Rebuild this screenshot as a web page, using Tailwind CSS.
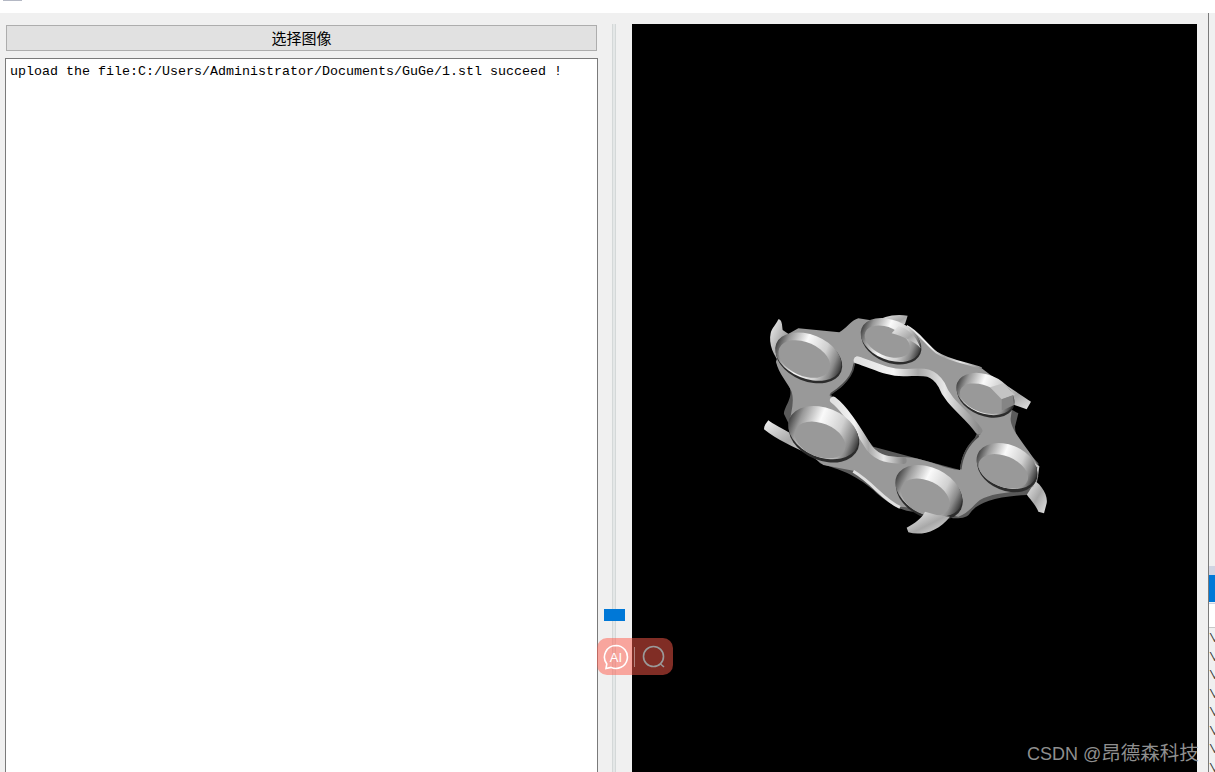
<!DOCTYPE html>
<html lang="en">
<head>
<meta charset="UTF-8">
<title>STL Viewer</title>
<script src="https://cdn.jsdelivr.net/npm/@tailwindcss/browser@4"></script>
</head>
<body class="bg-white overflow-hidden">
<div class="relative w-[1215px] h-[772px] overflow-hidden flex flex-col bg-[#f0f0f0]">
  <!-- top strip of the window behind -->
  <div class="h-[13px] bg-white shrink-0">
    <div class="ml-[3px] w-[19px] h-px bg-[#b4b8c4]"></div>
  </div>

  <div class="flex-1 flex min-h-0">
    <!-- left column -->
    <div class="w-[598px] shrink-0 pl-[5px] pt-[12px] flex flex-col gap-[7px]">
      <button class="ml-px w-[591px] h-[26px] bg-[#e1e1e1] border border-[#adadad] text-[15px] leading-[24px] text-black font-['Noto_Sans_CJK_SC',sans-serif]">选择图像</button>
      <div class="flex-1 bg-white border border-[#7a7a7a] border-b-0 pl-[4px] pt-[4px] text-[13.33px] leading-[18px] text-black font-['Liberation_Mono',monospace] whitespace-pre">upload the file:C:/Users/Administrator/Documents/GuGe/1.stl succeed !</div>
    </div>

    <!-- splitter -->
    <div class="w-[34px] shrink-0 relative flex justify-center pr-[2px] pt-[11px]">
      <div class="w-[4px] h-full bg-[#e4e7e7] border-x border-[#d4d8d8]"></div>
      <div class="absolute left-[6px] top-[596px] w-[21px] h-[12px] bg-[#0078d7]"></div>
    </div>

    <!-- 3D view -->
    <div class="w-[565px] shrink-0 mt-[11px] bg-black">
      <svg class="block w-full h-full" viewBox="632 24 565 748">
        <defs>
          <linearGradient id="ring" x1="0" y1="0" x2="1" y2="0">
            <stop offset="0" stop-color="#444"/>
            <stop offset=".14" stop-color="#999"/>
            <stop offset=".4" stop-color="#fafafa"/>
            <stop offset=".7" stop-color="#d0d0d0"/>
            <stop offset=".88" stop-color="#8a8a8a"/>
            <stop offset="1" stop-color="#3a3a3a"/>
          </linearGradient>
          <linearGradient id="edge" x1="0" y1="0" x2="1" y2="0">
            <stop offset="0" stop-color="#e0e0e0"/>
            <stop offset=".3" stop-color="#f4f4f4"/>
            <stop offset=".5" stop-color="#a8a8a8"/>
            <stop offset=".72" stop-color="#e8e8e8"/>
            <stop offset="1" stop-color="#8a8a8a"/>
          </linearGradient>
          <linearGradient id="horn" x1="0" y1="0" x2="1" y2="1">
            <stop offset="0" stop-color="#f2f2f2"/>
            <stop offset=".55" stop-color="#a8a8a8"/>
            <stop offset="1" stop-color="#e4e4e4"/>
          </linearGradient>
        </defs>
        <g transform="translate(740 300) scale(.33333)">
          <!-- horns -->
          <path fill="url(#horn)" d="M115 58 C126 58 126 75 128 90 L150 105 C125 120 115 150 125 195 C100 170 85 130 92 100 C95 85 108 75 115 58 Z"/>
          <path fill="url(#horn)" d="M85 361 C100 372 125 385 160 405 L225 445 L205 462 C160 440 110 420 72 388 C72 378 78 370 85 361 Z"/>
          <path fill="url(#horn)" d="M870 535 C900 545 925 585 920 610 L912 640 L895 635 C885 610 870 600 858 580 Z"/>
          <path fill="url(#horn)" d="M410 65 C425 52 460 40 503 47 L495 72 L470 85 L420 90 Z"/>
          <path fill="url(#horn)" d="M745 262 L790 250 C820 270 850 290 873 305 L860 328 L815 312 Z"/>
          <!-- lower shell -->
          <path fill="#5a5a5a" d="M108 185 C120 220 160 250 150 290 C145 310 130 330 132 342 L160 400 L240 490 C300 510 340 520 400 570 C430 600 470 625 500 632 L640 655 C660 655 680 655 690 640 C710 610 760 590 860 585 L895 530 L895 490 C860 450 825 420 825 380 L835 340 L800 320 L720 380 L660 510 L400 440 L300 320 L270 280 C300 270 330 250 340 180 Z"/>
          <!-- plate -->
          <path fill="#999" fill-rule="evenodd" d="M175 85 L298 97 C320 85 335 60 355 55 L500 78 C530 90 560 135 590 158 C630 185 690 190 725 205 L800 262 L820 300 L812 355 C810 390 860 440 890 490 L880 560 C830 580 760 575 720 600 C700 615 685 640 655 650 L540 625 L480 620 C430 600 400 550 340 512 L250 495 C230 480 200 460 180 430 L150 370 C150 340 165 310 155 275 C145 250 115 220 108 185 L130 110 Z M345 185 C340 210 335 240 268 285 C300 320 350 390 385 435 C410 470 440 470 500 472 C560 475 620 510 660 510 C665 480 670 440 722 402 C700 350 630 320 620 290 C600 250 580 222 540 222 C480 228 420 195 345 170 Z"/>
          <!-- hole edge highlight -->
          <path fill="none" stroke="url(#edge)" stroke-width="22" stroke-linecap="round" d="M352 180 C400 195 440 218 490 218 C540 218 575 205 605 255 C625 310 680 340 716 392"/>
          <path fill="none" stroke="url(#edge)" stroke-width="20" stroke-linecap="round" d="M280 300 C320 330 360 400 388 444 C415 478 450 480 490 482"/>
          <path fill="none" stroke="url(#edge)" stroke-width="6" d="M500 78 C530 90 560 135 590 158 C630 185 690 190 725 205"/>
          <path fill="none" stroke="#e0e0e0" stroke-width="9" d="M340 514 C400 550 430 600 480 622"/>
          <path fill="none" stroke="#c8c8c8" stroke-width="6" d="M880 490 L895 500 L888 545"/>
          <path fill="none" stroke="#4a4a4a" stroke-width="5" d="M662 508 C665 480 675 440 716 408"/>
          <path fill="none" stroke="#4a4a4a" stroke-width="5" d="M343 190 C340 210 335 240 272 282"/>
          <!-- disc 1 -->
          <ellipse cx="207" cy="176" rx="104" ry="68" transform="rotate(22 207 176)" fill="#2c2c2c"/>
          <ellipse cx="205" cy="170" rx="104" ry="66" transform="rotate(22 205 170)" fill="url(#ring)"/>
          <ellipse cx="193" cy="177" rx="82" ry="50" transform="rotate(24 193 177)" fill="#999"/>
          <!-- disc 2 -->
          <ellipse cx="454" cy="126" rx="94" ry="62" transform="rotate(22 454 126)" fill="#2c2c2c"/>
          <ellipse cx="452" cy="120" rx="94" ry="60" transform="rotate(22 452 120)" fill="url(#ring)"/>
          <ellipse cx="442" cy="125" rx="72" ry="42" transform="rotate(24 442 125)" fill="#999"/>
          <path fill="url(#horn)" d="M455 100 L475 78 C500 85 525 100 542 145 C525 125 490 110 455 100 Z"/>
          <!-- disc 3 -->
          <ellipse cx="737" cy="288" rx="90" ry="60" transform="rotate(22 737 288)" fill="#2c2c2c"/>
          <ellipse cx="735" cy="282" rx="90" ry="58" transform="rotate(22 735 282)" fill="url(#ring)"/>
          <ellipse cx="728" cy="296" rx="72" ry="40" transform="rotate(22 728 296)" fill="#999"/>
          <path fill="#c4c4c4" d="M750 262 L790 250 L825 285 L785 298 Z"/>
          <path fill="#858585" d="M785 298 L820 285 L822 315 L785 332 Z"/>
          <!-- disc 4 -->
          <ellipse cx="252" cy="406" rx="110" ry="76" transform="rotate(22 252 406)" fill="#2c2c2c"/>
          <ellipse cx="250" cy="398" rx="110" ry="74" transform="rotate(22 250 398)" fill="url(#ring)"/>
          <ellipse cx="240" cy="420" rx="80" ry="50" transform="rotate(22 240 420)" fill="#999"/>
          <!-- disc 5 -->
          <ellipse cx="568" cy="581" rx="106" ry="72" transform="rotate(26 568 581)" fill="#2c2c2c"/>
          <ellipse cx="566" cy="573" rx="106" ry="70" transform="rotate(26 566 573)" fill="url(#ring)"/>
          <ellipse cx="556" cy="592" rx="78" ry="50" transform="rotate(26 556 592)" fill="#999"/>
          <path fill="url(#horn)" d="M555 635 C545 655 525 670 500 683 L505 697 C545 708 595 695 630 650 L590 645 Z"/>
          <!-- disc 6 -->
          <ellipse cx="802" cy="506" rx="94" ry="66" transform="rotate(22 802 506)" fill="#2c2c2c"/>
          <ellipse cx="800" cy="498" rx="94" ry="64" transform="rotate(22 800 498)" fill="url(#ring)"/>
          <ellipse cx="790" cy="514" rx="78" ry="46" transform="rotate(22 790 514)" fill="#999"/>
        </g>
      </svg>
    </div>

    <!-- window behind, right edge -->
    <div class="flex-1 pl-[11px] min-w-0">
      <div class="h-full border-l border-[#7a7a7a] pt-[553px] overflow-hidden">
        <div class="h-[9px] bg-[#d0d4e2]"></div>
        <div class="h-[27px] bg-[#0078d7]"></div>
        <div class="h-[24px] bg-white border-t border-[#ccd2e4] mt-[1px]"></div>
        <div class="bg-[#f0f0f0] border-t border-[#c8c8c8] pt-[2px] font-['Liberation_Mono',monospace] text-[12px] leading-[18.5px] tracking-[-3px] text-[#333] whitespace-pre">\J
\J
\J
\J
\J
\J
\J
\J</div>
      </div>
    </div>
  </div>

  <!-- floating AI search pill -->
  <div class="absolute left-[597px] top-[638px] w-[76px] h-[37px] rounded-[10px] bg-[#ff5a4a]/50 flex items-center pl-[6px]">
    <svg class="w-[26px] h-[26px]" viewBox="0 0 26 26" fill="none" stroke="#fff" stroke-width="1.6">
      <path d="M13 1.5a11.5 11.5 0 1 1-5 21.9L3 24.5l.8-4.6A11.5 11.5 0 0 1 13 1.5Z"/>
      <text x="13" y="17.5" text-anchor="middle" fill="#fff" stroke="none" font-size="13" font-family="Liberation Sans, sans-serif">AI</text>
    </svg>
    <div class="ml-[5px] w-px h-[20px] bg-white/40"></div>
    <svg class="ml-[6px] w-[26px] h-[26px]" viewBox="0 0 26 26" fill="none" stroke="#9a9a9a" stroke-width="1.6">
      <circle cx="12.5" cy="12.5" r="10"/>
      <path d="M19.5 20l3.5 3"/>
    </svg>
  </div>

  <!-- watermark -->
  <div class="absolute left-[1027px] top-[741px] text-[18px] leading-[24px] text-[#8f8f8f] whitespace-nowrap font-['Liberation_Sans','Noto_Sans_CJK_SC',sans-serif]">CSDN @<span class="text-[19.5px]">昂德森科技</span></div>
</div>
</body>
</html>
